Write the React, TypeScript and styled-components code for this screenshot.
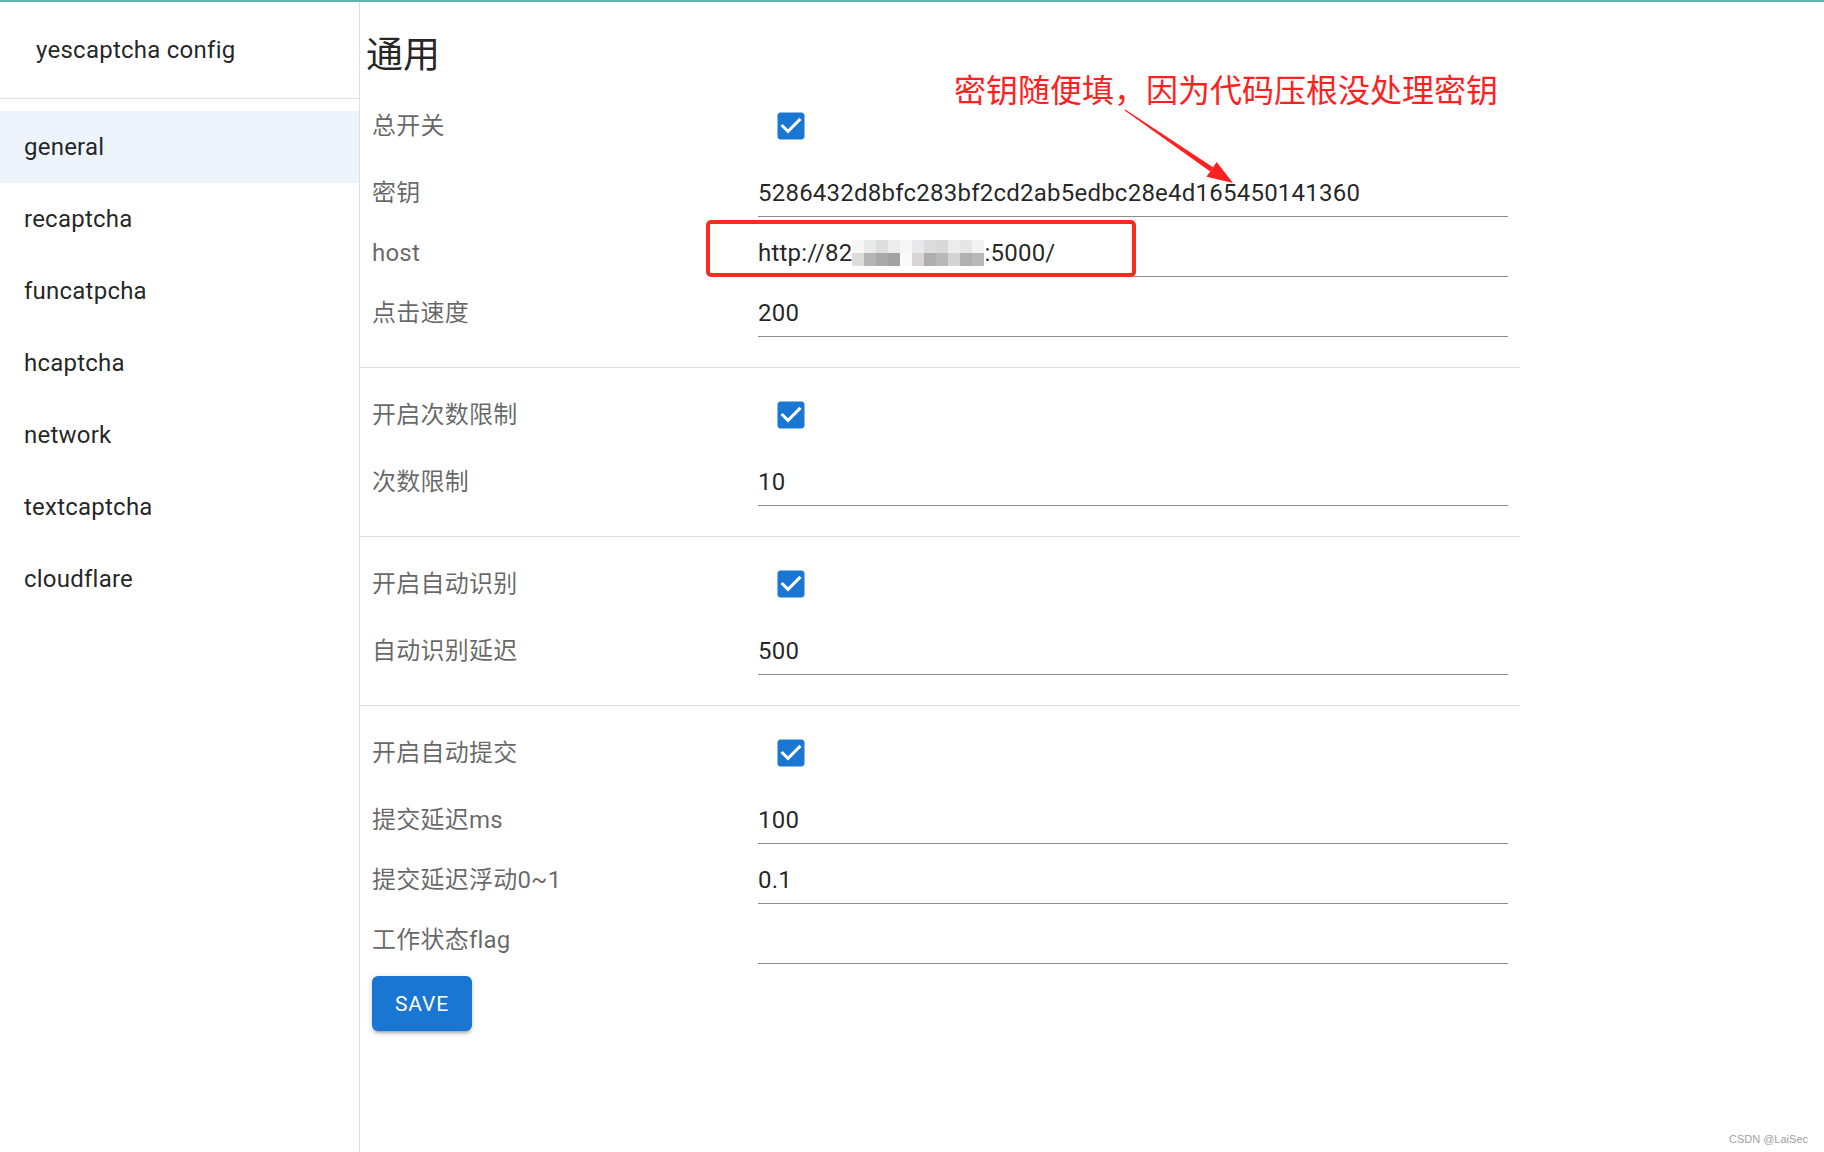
import React from 'react';
import styled, {createGlobalStyle} from 'styled-components';

const GlobalStyle = createGlobalStyle`
  html, body {
    margin: 0;
    padding: 0;
    background: #fff;
  }
  body {
    font-family: Roboto, "Noto Sans CJK SC", sans-serif;
    color: rgba(0, 0, 0, 0.87);
  }
`

const Page = styled.div`
  position: relative;
  width: 1824px;
  min-height: 1152px;
  overflow: hidden;
`

const TopBar = styled.div`
  height: 2px;
  background: #5fb4b1;
`

const Layout = styled.div`
  display: flex;
  min-height: 1150px;
`

const Sidebar = styled.aside`
  width: 359px;
  flex-shrink: 0;
  border-right: 1px solid #e0e0e0;
`

const SidebarHeader = styled.div`
  height: 96px;
  display: flex;
  align-items: center;
  padding-left: 36px;
  font-size: 24px;
  letter-spacing: 0.25px;
  border-bottom: 1px solid #e0e0e0;
`

const NavList = styled.ul`
  list-style: none;
  margin: 0;
  padding: 12px 0;
`

const NavItem = styled.li<{ $active?: boolean }>`
  height: 72px;
  line-height: 72px;
  padding-left: 24px;
  font-size: 24px;
  letter-spacing: 0.23px;
  background: ${p => p.$active ? '#edf4fb' : 'transparent'};
`

const Main = styled.main`
  width: 1160px;
  padding-top: 30px;
`

const Heading = styled.h1`
  margin: 0 0 14px;
  padding-left: 6px;
  font-size: 37px;
  line-height: 48px;
  font-weight: 400;
  color: rgba(0, 0, 0, 0.87);
`

const Section = styled.section<{ $first?: boolean; $last?: boolean }>`
  padding: ${p => p.$first ? '0' : '15px'} 0 ${p => p.$last ? '0' : '30px'};
  border-top: ${p => p.$first ? 'none' : '1px solid #e0e0e0'};
`

const Row = styled.div<{ $check?: boolean }>`
  display: grid;
  grid-template-columns: 386px 1fr;
  height: ${p => p.$check ? '63px' : '60px'};
  align-items: ${p => p.$check ? 'center' : 'start'};
`

const Label = styled.div<{ $check?: boolean }>`
  padding-left: 12px;
  font-size: 24px;
  line-height: 35px;
  letter-spacing: 0.23px;
  padding-top: ${p => p.$check ? '2px' : '19px'};
  color: rgba(0, 0, 0, 0.6);
`

const Control = styled.div`
  padding: 0 12px;
`

const InputBox = styled.div`
  padding: 19px 0 5px;
  line-height: 35px;
  font-size: 24px;
  height: 35px;
  letter-spacing: 0.23px;
  color: rgba(0, 0, 0, 0.87);
  border-bottom: 1px solid rgba(0, 0, 0, 0.45);
  white-space: nowrap;
`

const CheckWrap = styled.span`
  display: flex;
  padding-left: 15px;
`

const SaveButton = styled.button`
  margin: 12px 0 0 12px;
  height: 55px;
  min-width: 100px;
  padding: 0 23px;
  border: none;
  border-radius: 6px;
  background: #1976d2;
  color: #fff;
  font-family: Roboto, sans-serif;
  font-size: 21px;
  font-weight: 400;
  letter-spacing: 0.8px;
  box-shadow: 0 4px 2px -3px rgba(0, 0, 0, 0.2), 0 3px 3px 0 rgba(0, 0, 0, 0.14), 0 1px 7px 0 rgba(0, 0, 0, 0.12);
`

const Note = styled.div`
  position: absolute;
  left: 954px;
  top: 70px;
  font-family: "Noto Sans CJK SC", sans-serif;
  font-size: 32px;
  line-height: 36px;
  color: #ff2020;
  white-space: nowrap;
`

const Arrow = styled.svg`
  position: absolute;
  left: 1120px;
  top: 104px;
`

const Highlight = styled.div`
  position: absolute;
  left: 706px;
  top: 220px;
  width: 422px;
  height: 49px;
  border: 4px solid #ff2a1f;
  border-radius: 5px;
`

const Watermark = styled.div`
  position: absolute;
  right: 16px;
  bottom: 7px;
  font-family: "Liberation Sans", sans-serif;
  font-size: 11px;
  color: #a0a0a0;
`

const Mosaic = styled.svg`
  vertical-align: middle;
  margin-top: -4px;
`

const mosaicTop = ['#f7f7f7', '#e8eaea', '#dedede', '#ececec', '#f6f6f6', '#e9e9eb', '#dcdcdc', '#d9d9d9', '#ececec', '#e6e6e6', '#f2f2f2'];
const mosaicBottom = ['#dcdcd8', '#b5b5b5', '#a9a9a9', '#a2a2a2', '#fafafa', '#d8d6d4', '#aeaeb2', '#b8b8b8', '#d3d3d3', '#b0b0b0', '#b8b8b8'];

function Blur() {
    return (
        <Mosaic width="132" height="26" viewBox="0 0 132 26">
            {mosaicTop.map((c, i) => <rect key={'t' + i} x={i * 12} y={0} width={12} height={13} fill={c}/>)}
            {mosaicBottom.map((c, i) => <rect key={'b' + i} x={i * 12} y={13} width={12} height={13} fill={c}/>)}
        </Mosaic>
    )
}

function CheckIcon() {
    return (
        <CheckWrap>
            <svg width="36" height="36" viewBox="0 0 24 24">
                <path fill="#1976d2"
                      d="M19 3H5c-1.11 0-2 .9-2 2v14c0 1.1.89 2 2 2h14c1.11 0 2-.9 2-2V5c0-1.1-.89-2-2-2zm-9 14l-5-5 1.41-1.41L10 14.17l7.59-7.59L19 8l-9 9z"/>
            </svg>
        </CheckWrap>
    )
}

type Field = { label: string; kind: 'check' | 'text'; value?: React.ReactNode };

const sections: Field[][] = [
    [
        {label: '总开关', kind: 'check'},
        {label: '密钥', kind: 'text', value: '5286432d8bfc283bf2cd2ab5edbc28e4d165450141360'},
        {label: 'host', kind: 'text', value: <>http://82<Blur/>:5000/</>},
        {label: '点击速度', kind: 'text', value: '200'},
    ],
    [
        {label: '开启次数限制', kind: 'check'},
        {label: '次数限制', kind: 'text', value: '10'},
    ],
    [
        {label: '开启自动识别', kind: 'check'},
        {label: '自动识别延迟', kind: 'text', value: '500'},
    ],
    [
        {label: '开启自动提交', kind: 'check'},
        {label: '提交延迟ms', kind: 'text', value: '100'},
        {label: '提交延迟浮动0~1', kind: 'text', value: '0.1'},
        {label: '工作状态flag', kind: 'text', value: ''},
    ],
];

const navItems = ['general', 'recaptcha', 'funcatpcha', 'hcaptcha', 'network', 'textcaptcha', 'cloudflare'];

const App = () => {
    return (
        <Page>
            <GlobalStyle/>
            <TopBar/>
            <Layout>
                <Sidebar>
                    <SidebarHeader>yescaptcha config</SidebarHeader>
                    <NavList>
                        {navItems.map((n, i) => <NavItem key={n} $active={i === 0}>{n}</NavItem>)}
                    </NavList>
                </Sidebar>
                <Main>
                    <Heading>通用</Heading>
                    {sections.map((fields, si) => (
                        <Section key={si} $first={si === 0} $last={si === sections.length - 1}>
                            {fields.map(f => f.kind === 'check' ? (
                                <Row key={f.label} $check>
                                    <Label $check>{f.label}</Label>
                                    <Control><CheckIcon/></Control>
                                </Row>
                            ) : (
                                <Row key={f.label}>
                                    <Label>{f.label}</Label>
                                    <Control><InputBox>{f.value}</InputBox></Control>
                                </Row>
                            ))}
                        </Section>
                    ))}
                    <SaveButton>SAVE</SaveButton>
                </Main>
            </Layout>

            <Note>密钥随便填，因为代码压根没处理密钥</Note>
            <Arrow width="120" height="85" viewBox="0 0 120 85">
                <polygon points="4.7,6.4 5.3,5.6 93,63.2 90.2,67.4" fill="#ff2020"/>
                <polygon points="113,79 96.7,57.9 86.5,72.7" fill="#ff2020"/>
            </Arrow>
            <Highlight/>
            <Watermark>CSDN @LaiSec</Watermark>
        </Page>
    )
}

export default App;
